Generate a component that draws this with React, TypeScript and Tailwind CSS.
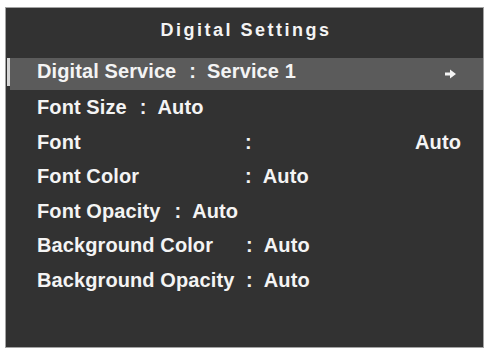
import React from "react";

const font = { fontFamily: '"Liberation Sans", Arial, Helvetica, sans-serif' };

function Row({ children }: { children: React.ReactNode }) {
  return (
    <div className="flex h-[34.5px] pl-[31px] leading-[34.5px] text-[20px] font-bold tracking-[0.1px] text-[#f4f4f4] whitespace-nowrap">
      {children}
    </div>
  );
}

export default function App() {
  return (
    <div className="w-[487px] h-[351px] bg-white overflow-hidden" style={font}>
      <div className="ml-[5px] mt-[7px] w-[479px] h-[341px] border border-[#a3a3a3] bg-[#323232] flex flex-col">
        <div className="h-[50px] pt-[12px] pl-[3px] text-center text-[18px] leading-[20px] font-bold tracking-[2.5px] text-[#f4f4f4]">
          Digital Settings
        </div>
        <div className="flex h-[32px]">
          <div className="ml-[1px] w-[3px] h-[28px] bg-[#d6d6d6]" />
          <div className="flex flex-1 bg-[#5b5b5b] pl-[27px] pr-[27px] text-[20px] font-bold tracking-[0.1px] text-[#f4f4f4] whitespace-nowrap">
            <span className="self-start leading-[26px]">Digital Service</span>
            <span className="self-start leading-[26px] ml-[13px] mr-[11px]">:</span>
            <span className="self-start leading-[26px]">Service 1</span>
            <svg className="ml-auto self-center" width="11" height="10" viewBox="0 0 11 10">
              <polygon points="0,3.5 5,3.5 5,0.5 11,5 5,9.5 5,6.5 0,6.5" fill="#f4f4f4" />
            </svg>
          </div>
        </div>
        <Row>
          <span>Font Size</span>
          <span className="ml-[13px] mr-[11px]">:</span>
          <span>Auto</span>
        </Row>
        <Row>
          <span className="w-[208px]">Font</span>
          <span>:</span>
          <span className="ml-auto mr-[22px]">Auto</span>
        </Row>
        <Row>
          <span className="w-[208px]">Font Color</span>
          <span className="mr-[11px]">:</span>
          <span>Auto</span>
        </Row>
        <Row>
          <span>Font Opacity</span>
          <span className="ml-[14px] mr-[11px]">:</span>
          <span>Auto</span>
        </Row>
        <Row>
          <span className="w-[209px]">Background Color</span>
          <span className="mr-[11px]">:</span>
          <span>Auto</span>
        </Row>
        <Row>
          <span className="w-[209px]">Background Opacity</span>
          <span className="mr-[11px]">:</span>
          <span>Auto</span>
        </Row>
      </div>
    </div>
  );
}
